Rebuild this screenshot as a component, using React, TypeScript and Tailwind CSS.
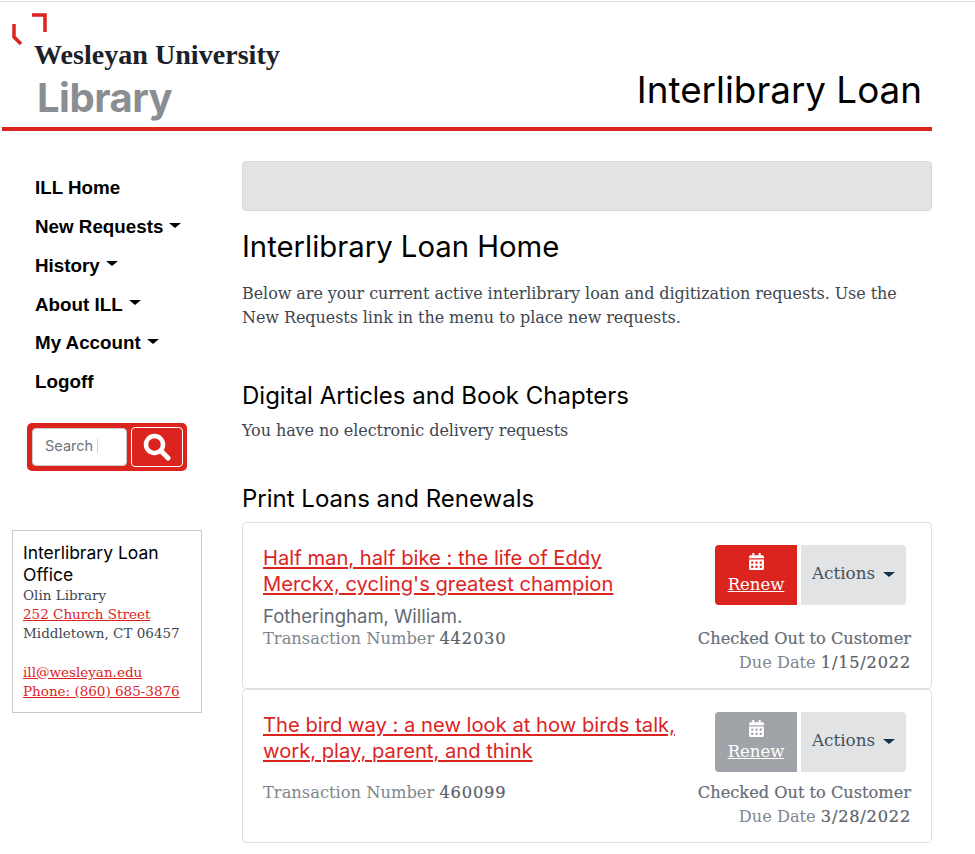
const SANS = "font-['Inter','Liberation_Sans',sans-serif]";
const SERIF = "font-['DejaVu_Serif','Liberation_Serif',serif]";

const navItems = [
  { label: 'ILL Home', caret: false },
  { label: 'New Requests', caret: true },
  { label: 'History', caret: true },
  { label: 'About ILL', caret: true },
  { label: 'My Account', caret: true },
  { label: 'Logoff', caret: false },
];

function Caret({ className }: { className: string }) {
  return <span className={`inline-block w-0 h-0 border-x-[6px] border-x-transparent border-t-[5px] ${className}`} />;
}

function CalendarIcon() {
  return (
    <svg viewBox="0 0 448 512" className="w-[15px] h-[17px] fill-current">
      <path d="M0 464c0 26.500 21.500 48 48 48h352c26.500 0 48-21.500 48-48V192H0v272zm320-196c0-6.600 5.400-12 12-12h40c6.600 0 12 5.400 12 12v40c0 6.600-5.400 12-12 12h-40c-6.600 0-12-5.400-12-12v-40zm0 128c0-6.600 5.400-12 12-12h40c6.600 0 12 5.400 12 12v40c0 6.600-5.400 12-12 12h-40c-6.600 0-12-5.400-12-12v-40zM192 268c0-6.600 5.400-12 12-12h40c6.600 0 12 5.400 12 12v40c0 6.600-5.400 12-12 12h-40c-6.600 0-12-5.400-12-12v-40zm0 128c0-6.600 5.400-12 12-12h40c6.600 0 12 5.400 12 12v40c0 6.600-5.400 12-12 12h-40c-6.600 0-12-5.400-12-12v-40zM64 268c0-6.600 5.400-12 12-12h40c6.600 0 12 5.400 12 12v40c0 6.600-5.400 12-12 12H76c-6.600 0-12-5.400-12-12v-40zm0 128c0-6.600 5.400-12 12-12h40c6.600 0 12 5.400 12 12v40c0 6.600-5.400 12-12 12H76c-6.600 0-12-5.400-12-12v-40zM400 64h-48V16c0-8.800-7.200-16-16-16h-32c-8.800 0-16 7.200-16 16v48H160V16c0-8.800-7.200-16-16-16h-32c-8.800 0-16 7.200-16 16v48H48C21.500 64 0 85.500 0 112v48h448v-48c0-26.500-21.500-48-48-48z" />
    </svg>
  );
}

function LoanCard({ title, author, number, due, renewClass, cardClass, statusClass }: {
  title: string[];
  author?: string;
  number: string;
  due: string;
  renewClass: string;
  cardClass: string;
  statusClass: string;
}) {
  return (
    <div className={`flex justify-between border border-[#dfdfdf] rounded-[4px] pl-5 pr-5 ${cardClass}`}>
      <div className="pt-[22px]">
        <a className={`block ${SANS} text-[20.2px] leading-[26px] text-[#dc241f] underline`}>
          {title[0]}<br />{title[1]}
        </a>
        {author ? (
          <div className={`${SANS} text-[18.500px] leading-[20px] text-[#626a73] mt-[9px]`}>{author}</div>
        ) : (
          <div className="h-[20px]" />
        )}
        <div className={`${SERIF} text-[16.300px] leading-[20px] text-[#80868d] ${author ? 'mt-[3px]' : 'mt-[-1px]'}`}>
          Transaction Number <span className="text-[#5b626a] tracking-[0.8px] [-webkit-text-stroke:0.2px]">{number}</span>
        </div>
      </div>
      <div className="flex flex-col items-end pt-[22px]">
        <div className="flex gap-1 mr-[5px]">
          <div className={`flex flex-col items-center justify-start pt-[8px] w-[82px] h-[60px] rounded-l-[4px] ${renewClass}`}>
            <CalendarIcon />
            <span className={`${SERIF} mt-[1px] text-[16.500px] leading-[28px] underline`}>Renew</span>
          </div>
          <div className={`flex items-center justify-center gap-2 w-[105px] h-[60px] bg-[#e1e3e5] rounded-r-[4px] ${SERIF} text-[16.800px] text-[#46505a] pb-[2px]`}>
            Actions
            <Caret className="border-t-[#12324a]" />
          </div>
        </div>
        <div className={`${statusClass} text-right ${SERIF} text-[16.200px] leading-[24px] text-[#80868d]`}>
          <div className="text-[#656d76] [-webkit-text-stroke:0.2px]">Checked Out to Customer</div>
          <div>Due Date <span className="text-[#5b626a] tracking-[0.8px] [-webkit-text-stroke:0.2px]">{due}</span></div>
        </div>
      </div>
    </div>
  );
}

export default function App() {
  return (
    <div className={`w-[975px] h-[854px] overflow-hidden bg-white pt-px ${SANS}`}>
      <div className="border-t border-[#e2e2e2]">
        <header className="ml-[2px] w-[930px] h-[129px] border-b-4 border-[#dc241f] flex justify-between items-end">
          <div className="pl-[10px] pt-[11px] self-start">
            <svg width="36" height="34" viewBox="0 0 36 34" className="block">
              <path d="M20 2H33V19" fill="none" stroke="#dc241f" strokeWidth="3.500" />
              <path d="M2 11V24L9 31" fill="none" stroke="#dc241f" strokeWidth="3.500" />
            </svg>
            <div className="ml-[22px] mt-[-6px] font-['Liberation_Serif',serif] font-bold text-[28.100px] leading-[28px] text-[#1a2129]">Wesleyan University</div>
            <div className="ml-[25px] mt-[7px] font-bold text-[40px] leading-[44px] tracking-[-0.5px] text-[#8a8d91]">Library</div>
          </div>
          <h1 className="pr-[10px] pb-[15px] text-[36.800px] leading-[44px] text-black">Interlibrary Loan</h1>
        </header>
      </div>

      <div className="flex">
        <aside className="w-[240px] shrink-0 pl-3">
          <nav className="pl-[23px] pt-[38px] flex flex-col">
            {navItems.map(item => (
              <a key={item.label} className="flex items-center gap-[6px] h-[38.800px] font-['Liberation_Sans',sans-serif] font-bold text-[18.800px] text-black">
                {item.label}
                {item.caret && <Caret className="border-t-black mb-1" />}
              </a>
            ))}
          </nav>

          <div className="ml-[15px] mt-[21px] w-[160px] h-[48px] bg-[#dc241f] rounded-[5px] flex items-center gap-1 pl-[5px]">
            <div className="w-[95px] h-[38px] bg-white rounded-[4px] border border-[#ccc] flex items-center pl-3 pb-px gap-1 text-[14.500px] text-[#6b7580]">
              Search
              <span className="w-px h-[14px] bg-[#f3cfa0]" />
            </div>
            <div className="w-[52px] h-[40px] border border-white rounded-[4px] flex items-center justify-center">
              <svg viewBox="0 0 28 28" className="w-[28px] h-[28px]" fill="none" stroke="#fff">
                <circle cx="11.500" cy="11.500" r="8.500" strokeWidth="4.500" />
                <path d="M18 18L25 25" strokeWidth="5" strokeLinecap="round" />
              </svg>
            </div>
          </div>

          <div className="mt-[59px] w-[190px] h-[183px] border border-[#c9c9c9] px-[10px] pt-[11px]">
            <div className="text-[17.500px] leading-[22px] text-black">Interlibrary Loan Office</div>
            <div className={`${SERIF} text-[13.500px] leading-[19px] text-[#3e4650]`}>
              <div>Olin Library</div>
              <a className="block text-[#dc241f] underline">252 Church Street</a>
              <div>Middletown, CT 06457</div>
              <div className="h-[20px]" />
              <a className="block text-[#dc241f] underline">ill@wesleyan.edu</a>
              <a className="block text-[#dc241f] underline">Phone: (860) 685-3876</a>
            </div>
          </div>
        </aside>

        <main className="w-[690px] ml-[2px] pt-[30px]">
          <div className="h-[50px] bg-[#e1e3e5] border border-[#d8d8d8] rounded-[4px]" />
          <h2 className="mt-[18px] text-[29.300px] leading-[36px] text-black">Interlibrary Loan Home</h2>
          <p className={`${SERIF} mt-[17px] text-[16px] leading-[24px] tracking-[-0.07px] text-[#3e4650]`}>
            Below are your current active interlibrary loan and digitization requests. Use the<br />
            New Requests link in the menu to place new requests.
          </p>
          <h3 className="mt-[51px] text-[24px] leading-[30px] text-black">Digital Articles and Book Chapters</h3>
          <p className={`${SERIF} mt-[8px] text-[16px] leading-[24px] tracking-[-0.07px] text-[#3e4650]`}>You have no electronic delivery requests</p>
          <h3 className="mt-[41px] mb-[8px] text-[24px] leading-[30px] text-black">Print Loans and Renewals</h3>
          <LoanCard
            title={['Half man, half bike : the life of Eddy', "Merckx, cycling's greatest champion"]}
            author="Fotheringham, William."
            number="442030"
            due="1/15/2022"
            renewClass="bg-[#dc241f] text-white"
            cardClass="h-[167px]"
            statusClass="mt-[22px]"
          />
          <LoanCard
            title={['The bird way : a new look at how birds talk,', 'work, play, parent, and think']}
            number="460099"
            due="3/28/2022"
            renewClass="bg-[#a0a4a9] text-white"
            cardClass="h-[154px]"
            statusClass="mt-[9px]"
          />
        </main>
      </div>
    </div>
  );
}
